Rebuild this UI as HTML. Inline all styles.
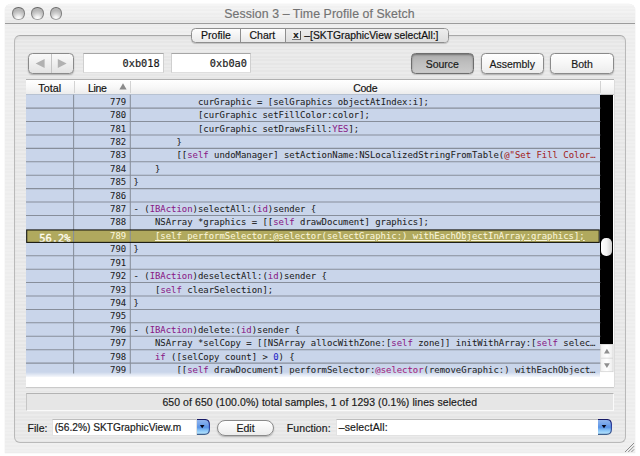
<!DOCTYPE html>
<html>
<head>
<meta charset="utf-8">
<title>Session 3 – Time Profile of Sketch</title>
<style>
html,body{margin:0;padding:0;background:#fff;}
body{width:640px;height:456px;position:relative;overflow:hidden;font-family:"Liberation Sans",sans-serif;font-size:10.3px;color:#1a1a1a;-webkit-text-stroke:0.18px;}
.abs{position:absolute;}
#win{left:5px;top:4px;width:629.8px;height:448.7px;border-radius:6px 6px 0 0;
 background:repeating-linear-gradient(to bottom,#f0f0f0 0px,#f0f0f0 1.8px,#ededed 1.8px,#ededed 3.6px);
 box-shadow:0 0 0 0.3px #ebebeb;}
#titlebar{left:0;top:0;width:630px;height:18.5px;border-radius:6px 6px 0 0;
 background:linear-gradient(to bottom,rgba(255,255,255,0.25) 0%,rgba(255,255,255,0) 50%,rgba(0,0,0,0.03) 100%),repeating-linear-gradient(to bottom,#f2f2f2 0px,#f2f2f2 1.8px,#eeeeee 1.8px,#eeeeee 3.6px);
 border-bottom:1px solid #9c9c9c;}
#title{left:-0.5px;top:0;width:630px;height:19px;line-height:21.4px;text-align:center;font-size:12.3px;color:#737373;letter-spacing:0.09px;}
.light{width:12.4px;height:12.4px;border-radius:50%;top:3.3px;border:1.5px solid #8c8c8c;border-color:#6a6a6a #808080 #a2a2a2 #808080;box-sizing:border-box;
 background:radial-gradient(ellipse 75% 80% at 50% 100%,#ffffff 0%,#f2f2f2 30%,#d0d0d0 65%,#b6b6b6 100%);}
#group{left:9.3px;top:31.1px;width:611.4px;height:407.8px;box-sizing:border-box;border:1px solid #b9b9b9;border-top-color:#a8a8a8;border-radius:6px;box-shadow:inset 0 2px 2.5px -1px rgba(0,0,0,0.09);
 background:repeating-linear-gradient(to bottom,#ebebeb 0px,#ebebeb 1.8px,#e6e6e6 1.8px,#e6e6e6 3.6px);}
#tabs{left:185.5px;top:23.5px;width:258.5px;height:15.3px;box-sizing:border-box;border:1px solid #8e8e8e;border-radius:4.5px;overflow:hidden;
 background:linear-gradient(to bottom,#fdfdfd 0%,#f3f3f3 50%,#e9e9e9 100%);box-shadow:0 1px 1px rgba(0,0,0,0.18);}
.tab{top:0;height:13.3px;line-height:13.6px;font-size:10.5px;white-space:nowrap;color:#111;}
.btn{box-sizing:border-box;border:1px solid #8a8a8a;border-radius:4.5px;text-align:center;white-space:nowrap;
 background:linear-gradient(to bottom,#ffffff 0%,#f6f6f6 50%,#ececec 100%);box-shadow:0 1px 1.5px rgba(0,0,0,0.25);}
.field{box-sizing:border-box;background:#fff;border:1px solid #e2e2e2;border-top-color:#bdbdbd;}
.mono{font-family:"DejaVu Sans Mono","Liberation Mono",monospace;}
#table{left:21px;top:76.4px;width:587.5px;height:307px;background:#fff;overflow:hidden;box-shadow:0 -1px 0 0 #b0b0b0,0.7px 0 0 0 #d6d6d6,0 0.8px 0 0 #c4c4c4;}
#thead{left:0;top:0;width:587.5px;height:13.6px;background:linear-gradient(to bottom,#ffffff 0%,#f7f7f7 55%,#ececec 100%);border-bottom:0.5px solid #c2c2c2;}
.th{top:0;height:13.6px;line-height:16.2px;font-size:10.8px;text-align:center;color:#111;}
.hsep{top:1px;width:1px;height:12px;background:#d3d3d3;}
#rows{left:0;top:13.8px;width:574.5px;height:283.2px;background:#c9d5ea;}
.r{-webkit-text-stroke:0.05px;left:0;width:574.5px;height:13.42px;line-height:17.4px;font-size:8.93px;white-space:pre;color:#1c1c1c;}
.ln{left:48px;width:52.2px;text-align:right;top:0;}
.cd{top:0;}
.k{color:#8a1a86;}
.s{color:#a31d1d;}
.n{color:#2222c8;}
.a{color:#a2207c;}
#hl{left:0.5px;top:149.3px;width:572.8px;height:12.8px;box-sizing:border-box;background:#b0a95e;border:1px solid #b0a95e;border-left-width:1.5px;}
#hl .r{color:#fbf6dc;line-height:12.2px;}
#fade{left:0;top:291.2px;width:574.5px;height:6.8px;background:linear-gradient(to bottom,rgba(255,255,255,0) 0%,#fff 100%);}
#white{left:0;top:297px;width:587.5px;height:10px;background:#fff;}
#sb{left:574.4px;top:14.6px;width:12.8px;height:249.6px;background:#000;}
#thumb{left:575.4px;top:157.8px;width:10.2px;height:18.2px;border-radius:5.1px;background:linear-gradient(to right,#ffffff 0%,#f4f4f4 50%,#cfcfcf 100%);}
#arrows{left:574px;top:264px;width:13.5px;height:33px;background:#fff;}
#status{left:21px;top:388.8px;width:587.5px;height:18.2px;box-sizing:border-box;border:1px solid #fafafa;border-top-color:#b3b3b3;border-left-color:#c6c6c6;background:#e6e6e6;
 text-align:center;line-height:18px;font-size:10.45px;letter-spacing:0.1px;color:#1a1a1a;}
.lbl{font-size:10.5px;white-space:nowrap;color:#1a1a1a;}
.popbtn{box-sizing:border-box;border-radius:0 5px 5px 0;border:1px solid #2a3c9c;border-top-color:#1b2a86;border-bottom-color:#3a58b8;
 background:linear-gradient(to bottom,#4a6fd0 0%,#6f9ce8 30%,#8fc0f8 60%,#a6d6ff 100%);}
</style>
</head>
<body>
<div id="win" class="abs">
  <div id="titlebar" class="abs"></div>
  <div class="abs light" style="left:7.2px;"></div>
  <div class="abs light" style="left:26.3px;"></div>
  <div class="abs light" style="left:44.7px;"></div>
  <div id="title" class="abs">Session 3 – Time Profile of Sketch</div>

  <div id="group" class="abs"></div>

  <div id="tabs" class="abs">
    <div class="abs" style="left:93.5px;top:0;width:164px;height:14px;background:linear-gradient(to bottom,#ededed,#dcdcdc);"></div>
    <div class="abs" style="left:48px;top:0;width:1px;height:14px;background:#8e8e8e;"></div>
    <div class="abs" style="left:93.5px;top:0;width:1px;height:14px;background:#8e8e8e;"></div>
    <div class="abs tab" style="left:9.6px;">Profile</div>
    <div class="abs tab" style="left:58px;">Chart</div>
    <div class="abs" style="left:100.5px;top:2.2px;width:8.6px;height:9.2px;box-sizing:border-box;border-right:1px solid #555;border-bottom:1px solid #777;background:#ececec;font-size:9.5px;line-height:8px;font-weight:bold;color:#111;text-align:center;">x</div>
    <div class="abs tab" style="left:112.8px;font-size:10.33px;">–[SKTGraphicView selectAll:]</div>
  </div>

  <!-- toolbar row -->
  <div class="abs btn" style="left:22.5px;top:49px;width:46.5px;height:20.5px;background:linear-gradient(to bottom,#f9f9f9 0%,#efefef 50%,#e2e2e2 100%);">
    <div class="abs" style="left:22.3px;top:0;width:1px;height:18.5px;background:#c4c4c4;"></div>
    <svg class="abs" style="left:0;top:0;" width="45" height="19" viewBox="0 0 45 19">
      <path d="M6.6 9.5 L15.6 5 L15.6 14 Z" fill="#b1b1b1"/>
      <path d="M37.6 9.5 L28.8 5 L28.8 14 Z" fill="#b1b1b1"/>
    </svg>
  </div>
  <div class="abs field mono" style="left:78px;top:49px;width:81px;height:19.7px;font-size:10.3px;line-height:19.2px;text-align:right;padding-right:3.3px;border-color:#a6a6a6 #cfcfcf #dedede #cfcfcf;">0xb018</div>
  <div class="abs field mono" style="left:166.2px;top:49px;width:80px;height:19.7px;font-size:10.3px;line-height:19.2px;text-align:right;padding-right:3.2px;border-color:#a6a6a6 #cfcfcf #dedede #cfcfcf;">0xb0a0</div>

  <div class="abs btn" style="left:405.7px;top:49.2px;width:63.2px;height:21px;line-height:21.6px;font-size:10.5px;border-color:#6e6e6e;background:linear-gradient(to bottom,#adadad 0%,#bebebe 45%,#cbcbcb 100%);box-shadow:inset 0 1px 2px rgba(0,0,0,0.35),0 1px 1px rgba(0,0,0,0.15);">Source</div>
  <div class="abs btn" style="left:475.5px;top:49.2px;width:63.4px;height:21px;line-height:21.6px;font-size:10.5px;">Assembly</div>
  <div class="abs btn" style="left:545.4px;top:49.2px;width:63.4px;height:21px;line-height:21.6px;font-size:10.5px;">Both</div>

  <!-- table -->
  <div id="table" class="abs">
    <div id="thead" class="abs"></div>
    <div class="abs th" style="left:0;width:47.5px;">Total</div>
    <div class="abs th" style="left:58px;width:28px;font-size:10.5px;letter-spacing:-0.3px;text-align:left;padding-left:3.9px;">Line</div>
    <svg class="abs" style="left:92.6px;top:2.5px;" width="8" height="7" viewBox="0 0 8 7"><path d="M4 0.3 L7.6 6.4 L0.4 6.4 Z" fill="#8a8a8a"/></svg>
    <div class="abs th" style="left:104.5px;width:469.5px;font-size:10.5px;letter-spacing:-0.25px;">Code</div>
    <div class="abs hsep" style="left:47.5px;"></div>
    <div class="abs hsep" style="left:104px;"></div>
    <div class="abs hsep" style="left:573.6px;"></div>

    <div id="rows" class="abs"></div>
    

    <div id="code" class="abs mono" style="left:0;top:13.3px;width:574.5px;height:283.7px;overflow:hidden;">
      <div class="abs r" style="top:0px;"><div class="abs ln">779</div><div class="abs cd" style="left:172px;">curGraphic = [selGraphics objectAtIndex:i];</div></div>
      <div class="abs r" style="top:13.42px;"><div class="abs ln">780</div><div class="abs cd" style="left:172px;">[curGraphic setFillColor:color];</div></div>
      <div class="abs r" style="top:26.84px;"><div class="abs ln">781</div><div class="abs cd" style="left:172px;">[curGraphic setDrawsFill:<span class="k">YES</span>];</div></div>
      <div class="abs r" style="top:40.26px;"><div class="abs ln">782</div><div class="abs cd" style="left:150.5px;">}</div></div>
      <div class="abs r" style="top:53.68px;"><div class="abs ln">783</div><div class="abs cd" style="left:150.5px;">[[<span class="k">self</span> undoManager] setActionName:NSLocalizedStringFromTable(<span class="s">@"Set Fill Color…</span></div></div>
      <div class="abs r" style="top:67.1px;"><div class="abs ln">784</div><div class="abs cd" style="left:129px;">}</div></div>
      <div class="abs r" style="top:80.52px;"><div class="abs ln">785</div><div class="abs cd" style="left:107.5px;">}</div></div>
      <div class="abs r" style="top:93.94px;"><div class="abs ln">786</div></div>
      <div class="abs r" style="top:107.36px;"><div class="abs ln">787</div><div class="abs cd" style="left:107.5px;">- (<span class="k">IBAction</span>)selectAll:(<span class="k">id</span>)sender {</div></div>
      <div class="abs r" style="top:120.78px;"><div class="abs ln">788</div><div class="abs cd" style="left:129px;">NSArray *graphics = [[<span class="k">self</span> drawDocument] graphics];</div></div>
      <div class="abs r" style="top:147.62px;"><div class="abs ln">790</div><div class="abs cd" style="left:107.5px;">}</div></div>
      <div class="abs r" style="top:161.04px;"><div class="abs ln">791</div></div>
      <div class="abs r" style="top:174.46px;"><div class="abs ln">792</div><div class="abs cd" style="left:107.5px;">- (<span class="k">IBAction</span>)deselectAll:(<span class="k">id</span>)sender {</div></div>
      <div class="abs r" style="top:187.88px;"><div class="abs ln">793</div><div class="abs cd" style="left:129px;">[<span class="k">self</span> clearSelection];</div></div>
      <div class="abs r" style="top:201.3px;"><div class="abs ln">794</div><div class="abs cd" style="left:107.5px;">}</div></div>
      <div class="abs r" style="top:214.72px;"><div class="abs ln">795</div></div>
      <div class="abs r" style="top:228.14px;"><div class="abs ln">796</div><div class="abs cd" style="left:107.5px;">- (<span class="k">IBAction</span>)delete:(<span class="k">id</span>)sender {</div></div>
      <div class="abs r" style="top:241.56px;"><div class="abs ln">797</div><div class="abs cd" style="left:129px;">NSArray *selCopy = [[NSArray allocWithZone:[<span class="k">self</span> zone]] initWithArray:[<span class="k">self</span> selec…</div></div>
      <div class="abs r" style="top:254.98px;"><div class="abs ln">798</div><div class="abs cd" style="left:129px;"><span class="k">if</span> ([selCopy count] &gt; <span class="n">0</span>) {</div></div>
      <div class="abs r" style="top:268.4px;"><div class="abs ln">799</div><div class="abs cd" style="left:150.5px;">[[<span class="k">self</span> drawDocument] performSelector:<span class="a">@selector</span>(removeGraphic:) withEachObject…</div></div>
    </div>

    <div id="hl" class="abs mono">
      <div class="abs" style="left:11.7px;top:-1px;height:13.4px;line-height:17.2px;font-size:10.45px;color:#fffdf0;-webkit-text-stroke:0.35px #fffdf0;white-space:pre;">56.2%</div>
      <div class="abs r" style="top:-1px;left:-1.5px;"><div class="abs ln">789</div><div class="abs cd" style="left:129px;text-decoration:underline;text-underline-offset:0.6px;text-decoration-thickness:0.8px;">[self performSelector:@selector(selectGraphic:) withEachObjectInArray:graphics];</div></div>
    </div>

    <div id="fade" class="abs"></div>
    <div id="white" class="abs"></div>
    <div id="sb" class="abs"></div>
    <div id="thumb" class="abs"></div>
    <div id="arrows" class="abs">
      <svg class="abs" style="left:0;top:0;" width="14" height="33" viewBox="0 0 14 33">
        <defs><linearGradient id="ag" x1="0" y1="0" x2="1" y2="0"><stop offset="0" stop-color="#f2f2f2"/><stop offset="0.5" stop-color="#ffffff"/><stop offset="1" stop-color="#ececec"/></linearGradient></defs>
        <rect x="0.7" y="0.3" width="12.4" height="27.4" fill="url(#ag)" stroke="#cfcfcf" stroke-width="0.7"/>
        <line x1="1" y1="14.2" x2="13" y2="14.2" stroke="#d2d2d2" stroke-width="0.8"/>
        <path d="M6.9 4.8 L9.8 9.6 L4 9.6 Z" fill="#8f8f8f"/>
        <path d="M6.9 24 L9.8 19.2 L4 19.2 Z" fill="#8f8f8f"/>
      </svg>
    </div>
  </div>

  <!-- status -->
  <div id="status" class="abs">650 of 650 (100.0%) total samples, 1 of 1293 (0.1%) lines selected</div>

  <!-- bottom row -->
  <div class="abs lbl" style="left:22.6px;top:418.3px;line-height:12px;">File:</div>
  <div class="abs field lbl" style="left:47px;top:415px;width:145px;height:16.6px;line-height:15.6px;padding-left:1.7px;font-size:10.2px;">(56.2%) SKTGraphicView.m</div>
  <svg class="abs" style="left:191.6px;top:415.1px;" width="13.8" height="16" viewBox="0.8 0 13.8 16">
    <defs><linearGradient id="pg1" x1="0" y1="0" x2="0" y2="1"><stop offset="0" stop-color="#92b5ee"/><stop offset="0.3" stop-color="#76a5ea"/><stop offset="0.52" stop-color="#5892e6"/><stop offset="0.72" stop-color="#86c2f6"/><stop offset="1" stop-color="#bce9ff"/></linearGradient>
    <linearGradient id="pg1s" x1="0" y1="0" x2="0" y2="1"><stop offset="0" stop-color="#171a66"/><stop offset="0.45" stop-color="#2738a0"/><stop offset="1" stop-color="#41618e"/></linearGradient></defs>
    <path d="M0 0.5 H8.3 Q13.200000000000001 0.5 13.200000000000001 5.4 V10.6 Q13.200000000000001 15.4 8.3 15.4 H0 Z" fill="url(#pg1)"/>
    <path d="M0 0.5 H8.3 Q13.200000000000001 0.5 13.200000000000001 5.4 V10.6 Q13.200000000000001 15.4 8.3 15.4 H0" fill="none" stroke="url(#pg1s)" stroke-width="1.1"/>
    <path d="M3.7 6 L8.3 6 L6 9.3 Z" fill="#05051a"/>
  </svg>
  <div class="abs btn" style="left:212px;top:415.6px;width:57px;height:16.2px;border-radius:8.2px;line-height:14.6px;font-size:10.5px;">Edit</div>
  <div class="abs lbl" style="left:281.8px;top:418.3px;line-height:12px;letter-spacing:0.08px;">Function:</div>
  <div class="abs field lbl" style="left:330.5px;top:415px;width:263px;height:16.6px;line-height:15.6px;padding-left:2.2px;letter-spacing:0.1px;">–selectAll:</div>
  <svg class="abs" style="left:593px;top:415.1px;" width="14" height="16" viewBox="0 0 14 16">
    <defs><linearGradient id="pg2" x1="0" y1="0" x2="0" y2="1"><stop offset="0" stop-color="#92b5ee"/><stop offset="0.3" stop-color="#76a5ea"/><stop offset="0.52" stop-color="#5892e6"/><stop offset="0.72" stop-color="#86c2f6"/><stop offset="1" stop-color="#bce9ff"/></linearGradient>
    <linearGradient id="pg2s" x1="0" y1="0" x2="0" y2="1"><stop offset="0" stop-color="#171a66"/><stop offset="0.45" stop-color="#2738a0"/><stop offset="1" stop-color="#41618e"/></linearGradient></defs>
    <path d="M0 0.5 H8.5 Q13.4 0.5 13.4 5.4 V10.6 Q13.4 15.4 8.5 15.4 H0 Z" fill="url(#pg2)"/>
    <path d="M0 0.5 H8.5 Q13.4 0.5 13.4 5.4 V10.6 Q13.4 15.4 8.5 15.4 H0" fill="none" stroke="url(#pg2s)" stroke-width="1.1"/>
    <path d="M3.7 6 L8.3 6 L6 9.3 Z" fill="#05051a"/>
  </svg>

  <!-- resize grip -->
  <svg class="abs" style="left:618px;top:436.8px;" width="12" height="12" viewBox="0 0 12 12">
    <path d="M2 11 L11 2 M5.2 11 L11 5.2 M8.4 11 L11 8.4" stroke="#808080" stroke-width="0.9" fill="none"/>
  </svg>
</div>
<svg id="grid" class="abs" style="left:0;top:0;pointer-events:none;" width="640" height="456" viewBox="0 0 640 456"><g stroke="#878e9a" stroke-width="1.05" fill="none"><line x1="26" y1="94.5" x2="600.3" y2="94.5" stroke="#b3bccb" stroke-width="0.8"/><line x1="26" y1="108.12" x2="600.3" y2="108.12"/><line x1="26" y1="121.54" x2="600.3" y2="121.54"/><line x1="26" y1="134.96" x2="600.3" y2="134.96"/><line x1="26" y1="148.38" x2="600.3" y2="148.38"/><line x1="26" y1="161.80" x2="600.3" y2="161.80"/><line x1="26" y1="175.22" x2="600.3" y2="175.22"/><line x1="26" y1="188.64" x2="600.3" y2="188.64"/><line x1="26" y1="202.06" x2="600.3" y2="202.06"/><line x1="26" y1="215.48" x2="600.3" y2="215.48"/><line x1="26" y1="255.74" x2="600.3" y2="255.74"/><line x1="26" y1="269.16" x2="600.3" y2="269.16"/><line x1="26" y1="282.58" x2="600.3" y2="282.58"/><line x1="26" y1="296.00" x2="600.3" y2="296.00"/><line x1="26" y1="309.42" x2="600.3" y2="309.42"/><line x1="26" y1="322.84" x2="600.3" y2="322.84"/><line x1="26" y1="336.26" x2="600.3" y2="336.26"/><line x1="26" y1="349.68" x2="600.3" y2="349.68"/><line x1="26" y1="363.10" x2="600.3" y2="363.10"/><line x1="73.6" y1="94.7" x2="73.6" y2="373.5"/><line x1="130.3" y1="94.7" x2="130.3" y2="373.5"/></g><rect x="26.7" y="229.95" width="572.5" height="12.45" fill="none" stroke="#15150c" stroke-width="1.1"/></svg>
</body>
</html>
